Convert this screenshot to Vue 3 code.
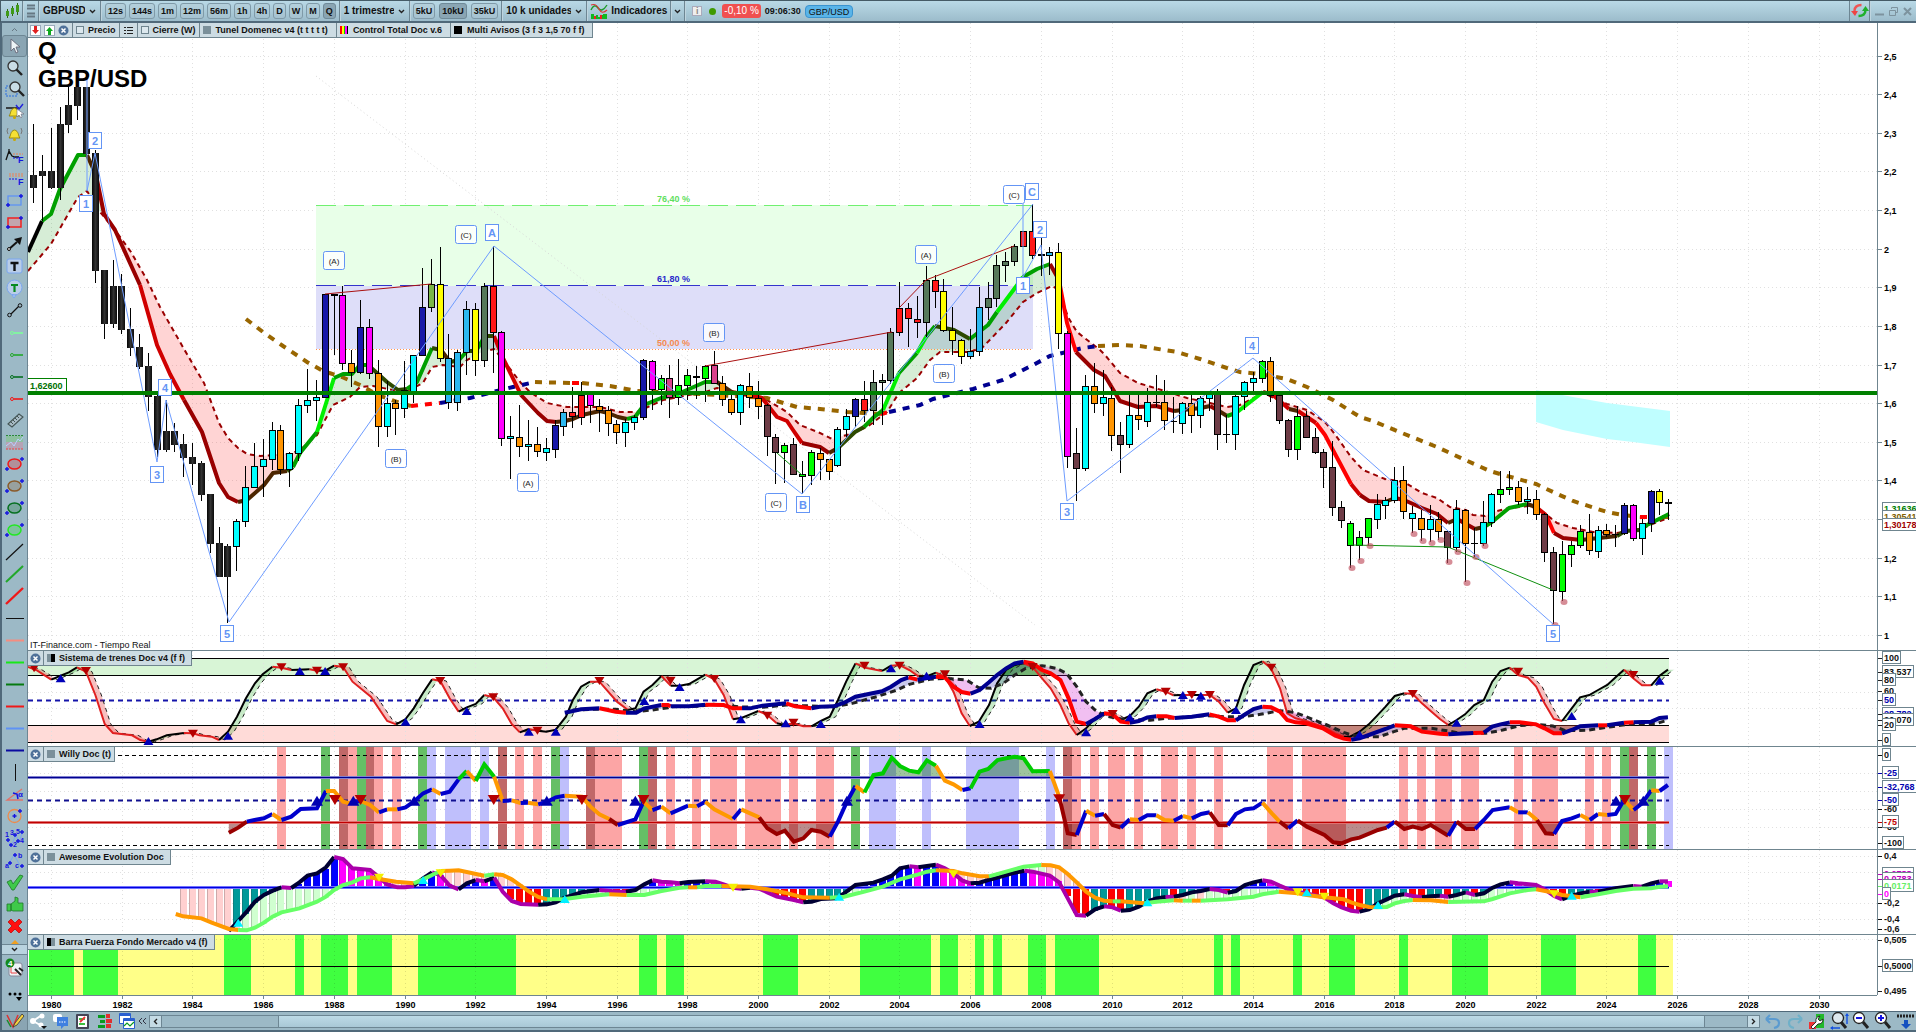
<script setup>
// ---------- shared geometry ----------
const X0 = 33.5
const STEP = 8.839
const years = Array.from({ length: 26 }, (_, i) => 1980 + i * 2)
const yearX = (y) => Math.round(51 + (y - 1980) * 35.35) + 0.5
const priceY = (v) => Math.round(635 - (v - 1) * 386.3) + 0.5
const prices = Array.from({ length: 16 }, (_, i) => 2.5 - i * 0.1)
const fmt = (v) => String(Math.round(v * 10) / 10).replace('.', ',')

const parse = (s, fx = (x) => x, fy = (y) => y, out = [], colour = 'k') => {
  for (const t of s.trim().split(/\s+/)) {
    if (!t.includes(',')) { colour = t; continue }
    const [x, y] = t.split(',').map(Number)
    const px = fx(x)
    if (out.length && px <= out[out.length - 1].x) continue
    out.push({ x: px, y: fy(y), c: colour })
  }
  out.last = colour
  return out
}
const fy = (y) => 645 + y / 3
const sheets = [[28, 2.45], [640, 2.45], [1260, 2.39]]
const track = (...parts) => {
  let out = []
  parts.forEach((p, i) => {
    const [o, k] = sheets[i]
    out = parse(p, (x) => o + x / k, fy, out, out.last)
  })
  return out
}
const spans = (...parts) => parts.flatMap((p, i) => p.trim().split(/\s+/).map((t) => {
  const [o, k] = sheets[i]
  const [, c, a, b] = t.match(/([a-z])(\d+)-(\d+)/)
  const x = Math.round(o + a / k)
  return { c, x, w: Math.round(o + b / k) - x }
}))
const marks = (...parts) => parts.flatMap((p, i) => p.trim() ? p.trim().split(/\s+/).map((t) => {
  const [o, k] = sheets[i]
  const [x, y] = t.split(',').map(Number)
  return [o + x / k, fy(y)]
}) : [])
const runs = (pts) => {
  const out = []
  for (let i = 1; i < pts.length; i++) {
    const p = pts[i]
    const last = out[out.length - 1]
    if (last && last.c === p.c) last.d += ` ${p.x},${p.y}`
    else out.push({ c: p.c, d: `${pts[i - 1].x},${pts[i - 1].y} ${p.x},${p.y}` })
  }
  return out
}
const line = (pts) => pts.map((p) => `${p.x},${p.y}`).join(' ')
const valueAt = (pts, x) => {
  for (let i = 1; i < pts.length; i++) {
    if (x >= pts[i - 1].x && x <= pts[i].x) {
      const a = pts[i - 1], b = pts[i]
      return { y: a.y + ((b.y - a.y) * (x - a.x)) / (b.x - a.x), c: b.c }
    }
  }
  return null
}
const between = (a, b) => {
  const out = []
  let cur = null
  const end = Math.min(a[a.length - 1].x, b[b.length - 1].x)
  for (let x = Math.max(a[0].x, b[0].x); x <= end; x += 2) {
    const p = valueAt(a, x).y, q = valueAt(b, x).y
    const above = p < q
    if (!cur || cur.above !== above) {
      if (cur) { cur.t.push([x, p]); cur.u.push([x, q]) }
      cur = { above, t: [], u: [] }
      out.push(cur)
    }
    cur.t.push([x, p]); cur.u.push([x, q])
  }
  return out.map((r) => ({ above: r.above, d: [...r.t, ...r.u.reverse()].map((v) => v.join(',')).join(' ') }))
}
const area = (pts, base) => `${pts[0].x},${base} ${line(pts)} ${pts[pts.length - 1].x},${base}`
const up = ([x, y], s) => `${x - s},${y + s - 1} ${x + s},${y + s - 1} ${x},${y - s + 1}`
const down = ([x, y], s) => `${x - s},${y - s + 1} ${x + s},${y - s + 1} ${x},${y + s - 1}`

// ---------- price pane ----------
const bodyColour = { k: 'url(#ink)', c: '#00ffff', o: '#ff9400', n: '#1818a8', m: '#ff00ff', y: '#ffff00', s: '#2cb8f0', r: '#ff1818', e: '#56785a', l: '#7ab648', g: '#00ff00', p: '#d9418c', b: '#6e3c46', d: '#000000' }
const candles = `k124,175,188,203 k155,171,176,221 k128,171,188,189 k107,124,188,200 k87,105,125,133 k87,87,106,120 k87,87,154,155 k150,153,271,283 k270,270,324,339 k260,286,324,328 k274,286,330,334 k308,329,348,356 k334,347,367,369 k353,366,397,411 k395,396,450,457 k400,431,450,452
k423,431,445,452 k434,444,458,477 k443,457,464,485 k461,463,495,501 k494,494,544,553 k527,543,577,577 k544,546,577,623 c519,521,547,571 c466,487,522,527 c443,466,488,488 c439,459,467,497 c422,430,460,470 o425,430,470,475 c452,453,470,487 c399,405,454,461 c369,400,406,413 c380,397,401,421
n294,294,398,398 d294,294,296,355 m286,295,364,370 o350,363,373,387 n300,327,373,374 m319,327,374,379 o360,373,427,447 c381,403,427,437 o400,403,409,435 c361,390,409,418 c355,355,393,403 n268,307,356,356 l259,284,308,312 y247,284,359,362 s334,358,403,409 s350,352,403,411 s301,309,353,375 y303,309,361,376
e283,286,361,367 r246,286,333,373 m331,332,439,446 c416,436,439,479 o405,437,447,457 c420,444,447,461 o427,444,452,457 c438,448,453,461 n420,425,450,458 s409,412,427,436 r387,412,417,428 r382,395,418,425 m392,392,406,423 o399,406,411,432 o406,410,424,436 o420,424,433,444 c419,422,433,447 c415,417,423,430
n359,360,418,420 m360,361,390,410 g375,378,390,405 p365,378,398,418 g359,385,398,405 g369,375,386,400 d366,376,378,399 g365,366,379,402 p351,365,384,384 o376,383,400,406 o393,399,413,415 c384,385,413,425 o373,386,398,408 o381,398,407,419 b404,405,437,456 b434,437,453,484 g443,445,453,483 b438,444,475,475
g461,474,477,494 g450,452,476,485 o448,453,460,480 o459,459,472,480 c427,429,466,467 c409,416,430,437 n398,399,417,427 r381,399,411,422 e370,382,411,425 e374,380,383,425 e328,332,381,384 r282,308,333,336 r303,308,319,347 r296,319,323,338 e266,280,323,337 r275,280,292,308 y279,291,331,332 y307,330,341,355
y339,340,357,364 s329,351,357,359 s287,307,352,356 e282,298,308,320 e255,265,299,307 e252,261,266,282 e244,246,262,266 r231,231,247,247 r204,231,256,259 d237,254,256,276 s247,252,256,275 y243,252,334,349 m331,333,457,468 b428,453,469,501 c375,386,469,471 o363,386,404,413 c370,397,404,416 o387,398,436,451
b422,435,445,473 c395,415,445,448 o395,415,420,430 c388,402,422,427 d375,402,403,407 o380,402,421,430 d397,421,422,433 c402,403,424,434 o395,403,416,433 c396,398,416,428 c392,393,399,411 b389,394,435,450 d415,434,435,443 c395,396,435,450 c381,382,397,410 c372,378,383,392 g360,361,379,383 o357,361,396,402
b395,395,421,424 b419,420,450,457 g406,416,450,460 b411,416,438,438 b428,437,453,454 b449,452,468,488 b441,467,508,516 b501,507,521,528 g521,523,546,568 g531,537,546,560 g518,518,538,546 c494,504,520,529 c497,500,506,519 c467,480,501,503 o466,480,512,519 c506,513,519,533 o510,518,530,541 c505,519,530,542
o512,519,532,540 b531,531,548,563 c500,509,548,552 o509,510,544,582 d528,543,544,557 c501,522,544,546 c493,494,523,527 g471,489,495,503 g471,487,490,495 o481,487,502,505 c487,499,502,514 o490,499,515,520 b513,514,553,562 b547,552,591,624 g541,554,592,601 g541,545,555,567 g525,531,546,548 o514,532,551,555
c526,530,552,558 o524,530,535,537 d525,534,535,547 n503,505,534,535 m504,505,539,541 c519,523,539,555 n490,491,524,532 y489,491,503,515 d499,502,504,520`.trim().split(/\s+/).map((t, i) => {
  const [h, a, b, l] = t.slice(1).split(',').map(Number)
  return { x: Math.floor(X0 + i * STEP), h, a, b, l, c: t[0] }
})

const trend = parse(`k 28,252 42,221 g 51,214 60,189 78,155 87,155 b 96,175 r 104,214 115,230 140,285 h 157,345 170,374 184,400 r 202,432 219,483 228,497 238,502 b 247,500 264,485 273,473 287,471 d 293,467 g 300,453 317,432 l 334,378 g 343,374 352,374 360,365 368,365 d 387,382 398,390 407,389 g 417,382 432,348 d 441,350 b 450,362 d 459,360 g 467,351 d 476,351 g 485,336 d 494,336 h 503,358 521,395 r 538,413 547,421 556,422 b 565,421 573,419 582,415 600,411 608,413 618,417 627,419 g 635,417
644,405 661,398 680,393 705,382 717,382 b 733,393 r 749,395 h 762,398 777,417 787,421 793,430 802,443 r 820,447 829,453 b 838,448 d 855,432 864,427 g 874,417 883,410 l 899,373 g 917,353 l 926,337 g 935,326 d 954,330 970,339 g 988,325 997,312 l 1006,300 1023,277 g 1037,269 1050,264 r 1059,280 f 1067,323 1076,352 r 1094,370 1105,376 1120,401 1138,407 1156,406 1174,411 b 1183,410 1201,408 1210,406 r 1219,411 b 1227,416 g 1236,413 l 1254,399 1263,392 r 1273,395 h 1289,409
b 1298,411 h 1316,423 f 1325,435 1334,452 1351,484 h 1360,495 r 1369,501 1385,502 b 1395,498 r 1404,500 1422,508 1437,514 1448,523 b 1457,519 r 1475,529 b 1484,527 g 1492,522 1509,508 1527,504 b 1536,507 h 1546,515 f 1554,533 r 1563,538 1581,540 b 1599,538 1617,536 d 1625,531 1640,530 g 1647,525 1669,514`)
const trendColour = { k: '#000', g: '#00a000', l: '#00f000', d: '#2d4a00', b: '#4d2600', r: '#990000', h: '#d00000', f: '#ff0000' }
const signal = parse(`28,271 51,244 78,197 87,191 100,212 115,230 131,252 147,280 160,307 184,349 204,383 219,423 228,438 238,448 247,454 260,456 290,454 300,450 317,435 333,405 350,397 360,387 373,386 393,390 407,391 423,383 432,367 443,365 460,367 467,360 482,352 494,349 507,365 521,383 530,392 547,403 567,407 600,407 620,412 637,412 663,400 705,392 717,388 762,397 787,412 800,425 820,433 832,439 847,435 867,427 887,412 899,393 917,378 930,360 940,352 970,352 983,347 1006,323 1023,302 1037,293 1052,286 1059,290 1068,317 1077,332 1100,350 1105,355 1120,373 1138,383 1165,391 1187,398 1210,403 1227,407 1240,405 1263,393 1287,404 1307,410 1325,422 1334,433 1351,457 1363,470 1385,479 1404,482 1422,493 1437,498 1450,507 1466,510 1473,515 1485,516 1490,513 1509,508 1530,506 1543,512 1557,523 1573,528 1593,532 1617,533 1640,529 1660,521 1669,518`)
const tunnel = between(trend, signal)
const longMa = parse(`b 246,319 263,332 283,346 307,362 323,371 342,377 360,385 378,395 400,403 411,406 r 440,403 n 470,398 493,392 513,387 535,382 b 572,383 r 582,383 b 610,386 637,391 700,394 767,398 780,402 797,407 820,409 847,412 880,414 r 889,412 n 920,405 933,399 973,389 1003,380 1033,365 1050,356 1083,348 1098,346 b 1120,345 1140,346 1177,352 1200,359 1227,368 1240,372 1260,374 1287,379 1307,387 1333,400 1360,417 1373,421 1397,431 1437,447 1463,459 1490,471 1500,474 1518,479 1536,484 1553,492 1573,501 1607,512 1623,515 1640,517 r 1648,517 b 1669,517`)
const longColour = { b: '#996600', r: '#ff0000', n: '#000090' }

const waves = [['2', 95, 141], ['1', 86, 204], ['4', 165, 388], ['3', 157, 475], ['5', 227, 634], ['A', 492, 233], ['B', 803, 505], ['C', 1032, 192], ['2', 1040, 230], ['1', 1023, 286], ['3', 1067, 512], ['4', 1252, 346], ['5', 1553, 634]]
const subWaves = [['(A)', 334, 261], ['(C)', 466, 235], ['(B)', 396, 459], ['(A)', 528, 483], ['(B)', 714, 333], ['(C)', 776, 503], ['(A)', 926, 255], ['(B)', 944, 374], ['(C)', 1014, 195]]
const dots = [[1352, 568], [1361, 561], [1370, 546], [1414, 534], [1423, 541], [1432, 543], [1441, 540], [1449, 562], [1458, 552], [1467, 583], [1476, 557], [1485, 546], [1564, 602], [1555, 625]]

// ---------- Sistema de trenes ----------
const fast = track(
  'r 0,66 20,75 57,104 k 80,92 100,82 120,67 r 142,80 165,150 188,237 208,264 255,271 275,285 295,290 k 315,283 340,271 382,264 r 404,265 420,271 450,275 468,285 k 490,260 512,215 534,160 556,115 575,88 599,65 r 621,68 645,75 k 690,73 r 708,77 k 728,77 750,62 r 772,66 795,110 840,155 880,228 902,238 k 925,222 945,190 968,143 990,103 r 1010,108 1033,160 1055,200 k 1075,187 1097,177 1118,150 r 1140,157 1163,190 1185,237 1205,262 k 1227,252 r 1248,257 k 1270,260 1293,254 1318,215 1335,165 1355,125 1377,110 r 1400,110 1443,170 1470,195 k 1488,190 1508,140 1530,120 1552,93',
  '52,95 r 75,122 k 97,122 120,117 140,103 160,89 r 182,103 205,150 228,223 k 250,218 270,208 290,198 r 312,210 335,235 k 355,240 r 376,235 400,244 420,244 k 443,228 465,215 485,165 505,110 528,55 r 550,68 593,78 k 615,62 r 636,60 660,75 683,95 k 700,95 725,83 r 747,95 768,140 788,205 808,243 k 830,230 855,180 875,115 897,75 918,60 940,55 r 962,66 985,100 1006,130 1030,180 1050,235 1070,270 k 1093,250 1115,220 1137,203 r 1158,208 1178,225 k 1200,213 1222,185 1243,145 1265,133 r 1288,140 1307,151 k 1330,150 r 1352,150 k 1374,150 r 1396,150 1418,170 1440,203 k 1460,190 1480,120 1503,60 1525,49 r 1546,70 1568,130',
  '27,75 45,130 65,205 85,220 110,228 150,245 180,265 200,275 k 215,275 238,260 260,238 280,212 300,185 322,153 345,145 r 365,147 387,175 410,200 430,222 450,240 k 470,225 490,208 512,180 535,165 555,110 575,78 597,68 r 617,90 640,98 660,125 680,175 702,222 722,228 k 745,190 765,157 787,150 808,135 830,120 850,97 870,74 r 892,100 913,121 935,121 k 955,92 975,74')
const ribbon = fast.slice(1).map((p, i) => {
  const q = fast[i]
  return { c: p.c, d: `${q.x},${q.y} ${p.x},${p.y} ${p.x + 6},${p.y} ${q.x + 6},${q.y}` }
})
const slow = track(
  'n 1315,203 1355,193 1400,190 r 1440,200 1465,203 n 1490,203 1510,190 1552,180 r 1568,180',
  '75,184 n 120,184 160,179 r 205,180 228,190 250,190 n 270,190 300,182 358,175 r 380,184 420,190 n 440,185 475,184 500,173 528,155 560,147 593,139 615,125 640,105 658,97 r 680,104 n 700,100 725,95 r 747,97 768,125 788,141 810,146 n 832,135 855,112 875,90 897,70 918,55 940,50 r 962,55 985,75 1006,85 1030,105 1050,160 1070,230 1093,237 n 1115,222 1137,205 r 1158,208 1178,230 1200,233 n 1222,228 1243,217 1265,214 r 1290,214 1310,219 n 1352,215 1395,208 r 1418,215 1440,226 1460,226 n 1480,210 1503,192 1525,185 r 1546,187 1568,200',
  '45,198 65,225 85,232 110,235 150,250 180,272 200,281 218,284 n 238,280 260,270 300,252 322,241 r 360,244 387,260 430,266 450,268 n 510,264 r 535,263 n 555,245 575,238 597,232 r 620,232 660,238 680,250 702,265 722,265 n 745,255 765,244 808,241 r 830,241 n 870,233 r 893,232 n 935,230 955,219 975,217')
const slowLag = track(
  '1335,195 1380,193 1440,193 1488,200 1530,195 1568,188',
  '75,185 140,184 180,178 250,186 300,187 358,180 420,183 470,186 520,175 580,155 630,135 660,118 710,103 747,100 800,105 830,128 860,130 890,115 918,90 945,70 985,62 1020,70 1045,85 1070,125 1093,170 1115,195 1140,213 1180,222 1250,226 1290,220 1350,215 1390,212 1430,215 1480,215 1520,208 1568,197',
  '45,200 85,203 120,220 160,240 200,262 218,270 250,275 285,275 320,260 345,250 410,250 450,258 480,265 540,265 580,255 620,242 660,238 700,243 730,257 780,256 840,245 880,238 950,235 975,225')
const slowFill = between(slow, slowLag)
const trainUp = marks('80,100 295,288 490,272 666,78 728,78 925,230 1075,198 1227,260 1293,260 1510,168', '97,126 247,223 357,235 443,237 615,70 702,92 832,237 1093,262 1200,217 1330,150 1374,152 1460,195', '238,268 470,233 745,213 955,107')
const trainDown = marks('15,70 142,78 404,266 621,67 708,77 772,67 1010,108 1140,157 1248,257 1400,108', '75,107 182,102 312,212 376,233 550,62 636,62 747,88 962,66 1158,207 1288,140 1352,150 1396,150', '27,68 365,147 617,80 892,90')

// ---------- Willy ----------
const willyColour = { r: '#fca5a5', g: '#66bf66', d: '#c06868', b: '#bfbffc' }
const stripes = spans(
  'r610-632 g718-740 d762-784 r784-806 g806-827 d827-848 r848-870 r892-914 g955-978 b978-1000 b1022-1085 b1107-1129 d1151-1174 r1194-1215 r1237-1259 g1281-1303 b1303-1325 d1367-1389 r1389-1455 g1497-1519 d1519-1541',
  'r64-86 r127-149 r171-238 r257-345 r365-387 r431-475 g517-539 b561-627 b691-713 b799-929 b995-1017 d1036-1058 r1058-1080 r1102-1125 r1147-1188 r1210-1232 r1276-1318 r1340-1362 r1406-1428',
  'r17-79 r100-206 r332-354 r375-397 r418-459 r480-523 r607-629 r650-712 r777-798 r817-839 g860-882 d882-904 g925-947 b966-987')
const willy = track(
  'r 492,563 515,548 536,530 n 555,525 578,520 599,507 o 621,525 n 645,515 668,492 708,490 730,438 o 750,438 772,470 790,475 n 800,470 815,468 o 838,480 860,502 n 880,493 o 905,493 n 925,487 945,470 968,445 990,433 o 1011,447 n 1033,440 1055,403 g 1075,378 o 1097,408 g 1118,358 1142,395 o 1163,468 n 1185,466 o 1207,474 n 1225,473 o 1250,478 n 1272,470 1293,457 1315,452 o 1357,455 1378,485 1400,508 1424,522 r 1445,540 n 1488,523 1508,470 o 1530,495 n 1552,485',
  'o 75,505 n 118,482 o 140,484 n 160,470 o 182,493 228,522 n 248,493 o 292,517 r 312,550 335,567 355,557 377,590 400,580 420,555 443,560 465,575 n 485,530 507,470 528,423 o 550,442 g 572,390 595,385 617,338 637,363 660,377 682,382 703,346 725,362 o 747,407 768,418 790,435 n 810,430 g 832,380 853,372 876,345 897,340 918,335 940,340 962,379 1004,378 o 1027,455 r 1048,565 1070,570 n 1093,497 o 1115,512 n 1137,507 r 1158,540 1178,548 n 1200,523 o 1222,525 n 1243,511 1265,511 o 1285,525 1308,527 n 1330,513 o 1352,520 n 1375,507 1396,502 r 1418,540 1440,541 n 1460,507 1482,493 1503,490 1525,473 o 1548,505',
  '47,530 r 68,550 n 90,526 r 112,545 154,570 175,592 195,595 218,583 238,578 282,555 303,548 n 322,530 r 345,552 365,545 387,552 408,540 450,572 n 470,530 r 492,552 514,552 n 535,525 556,495 597,487 o 617,502 n 640,502 o 662,525 r 683,565 703,567 n 722,528 745,520 766,510 o 788,525 n 808,507 o 830,510 n 850,507 870,465 o 893,495 n 913,475 935,436 o 955,438 n 975,420')
const willyLine = { n: '#0000cc', o: '#ff9900', r: '#990000', g: '#00cc00' }
const willyUp = marks('708,467 797,467 946,467 1271,467 1488,467', '507,467', '851,467 916,467')
const willyDown = marks('752,465 815,465 1141,465 1357,465 1508,465', '1027,463', '872,465')

// ---------- Awesome ----------
const aoFast = track(
  'k 492,858 515,828 536,800 556,770 578,750 600,737 621,727 p 645,729 k 665,712 685,692 708,685 730,667 750,636 p 772,642 795,670 838,675 860,697 880,718 905,727 925,727 945,722 k 968,700 990,682 p 1010,690 1033,722 1055,733 k 1075,715 1097,705 p 1118,709 k 1142,698 p 1163,740 1185,768 1207,777 1250,779 k 1272,778 1293,772 1315,758 1357,742 1400,735 p 1445,740 1465,740 k 1488,735 1510,718 1530,706 p 1552,710',
  '75,712 97,715 k 118,711 160,709 p 185,710 205,718 228,728 248,731 k 270,728 p 292,731 312,742 335,755 377,765 400,772 k 420,770 443,762 480,760 500,745 528,720 572,713 595,703 617,692 637,670 660,664 p 682,667 k 703,663 725,659 p 747,670 768,685 790,707 810,715 k 832,713 853,705 876,698 897,690 918,683 942,677 p 962,680 1004,692 1027,712 1048,760 1070,810 1093,812 k 1115,793 1137,784 p 1158,787 1178,797 k 1200,795 1222,785 1243,770 1265,760 1288,756 p 1308,755 k 1330,750 1352,742 1374,738 1396,732 p 1418,735 1440,743 k 1460,738 1482,720 1503,712 1525,706 p 1546,710',
  '47,722 68,733 90,740 112,745 154,758 175,775 195,787 218,797 238,800 k 260,793 282,775 303,763 322,752 345,748 p 365,753 387,757 k 408,754 430,752 p 450,755 k 470,750 492,742 p 514,750 k 535,745 556,728 575,718 597,712 p 617,715 660,720 683,735 703,753 722,763 k 745,752 766,745 788,740 p 808,740 k 850,730 892,723 p 913,725 k 935,715 955,709 p 975,709')
const aoSlow = track(
  'o 362,807 380,814 425,820 450,833 492,852 515,855 g 536,856 556,848 578,833 599,815 621,802 665,790 708,770 730,755 750,735 772,720 795,712 815,700 838,697 o 860,702 902,710 945,715 g 968,703 990,690 1011,678 o 1033,677 1055,676 1118,692 g 1142,688 o 1163,690 1185,703 1207,722 1228,740 1250,756 1272,763 g 1315,762 1357,755 1424,748 o 1467,750 g 1510,750 1552,738',
  '97,728 118,727 o 140,727 g 160,723 200,723 o 270,725 312,733 355,743 400,757 465,758 g 500,755 550,740 595,725 637,703 682,688 703,680 725,676 o 768,678 790,685 832,694 855,694 g 897,680 940,665 983,660 o 1006,661 1027,667 1048,687 1070,712 1093,740 1115,758 1137,767 1158,769 g 1178,769 o 1235,775 g 1265,770 1308,766 o 1330,767 g 1352,767 o 1374,767 g 1440,763 1503,755 1525,748',
  '45,740 o 90,745 112,750 154,757 200,763 218,772 238,780 260,786 282,787 g 303,786 322,775 345,768 365,765 o 408,766 450,771 g 535,769 556,762 597,745 640,735 660,733 o 703,743 722,750 766,757 g 808,748 850,738 892,731 935,730 955,725 975,724')
const ZERO = 887
const bars = []
for (let i = 17; i < 186; i++) {
  const x = X0 + i * STEP
  const s = valueAt(aoSlow, x - 1), f = valueAt(aoFast, x - 1)
  const box = (y, c) => bars.push({ x: Math.floor(x) - 3, y: Math.min(y, ZERO), h: Math.abs(y - ZERO), c })
  if (s) box(s.y, s.c === 'o' ? '#ffd0d0' : '#d0ffd0')
  if (f) box(f.y, f.y < ZERO ? (f.c === 'k' ? '#0000ff' : '#ff00ff') : (f.c === 'k' ? '#009999' : '#ff0000'))
}
const aoColour = { k: '#000033', p: '#aa00aa', o: '#ff9900', g: '#66ff66' }
const aoUp = marks('515,833 968,705 1315,762', '488,755 1243,772', '112,742 282,780 745,752')
const aoDown = marks('860,698 1011,685', '228,728 768,688', '90,742 154,755 703,748')

// ---------- Barra ----------
const force = spans(
  'g2-113 g135-220 g480-546 g654-676 g718-784 g806-892 g955-1196 g1497-1541',
  'g64-108 g301-387 g539-713 g735-779 g821-843 g865-887 g951-995 g1017-1125 g1406-1428 g1448-1470',
  'g79-100 g165-227 g332-354 g459-545 g672-755 g904-947')

// ---------- value axes: [text, y, colour, box width] ----------
const mainTags = [['1,31636', 509, '#008000', 38], ['1,30541', 517, '#806000', 38], ['1,30178', 525, '#a00000', 38]]
const trainTags = [['60', 691, '#111'], ['100', 658, '#111', 18], ['83,537', 672, '#111', 31], ['80', 680, '#111', 13], ['50', 700, '#0000b0', 13], ['28,782', 714, '#0000b0', 31], ['26,070', 720, '#111', 31], ['20', 725, '#111', 13], ['0', 740, '#111', 8]]
const willyTags = [['-60', 809, '#111'], ['-80', 827, '#111'], ['0', 755, '#111', 8], ['-25', 773, '#0000b0', 16], ['-32,768', 787, '#0000b0', 34], ['-50', 800, '#0000b0', 16], ['-75', 822, '#c00000', 16], ['-100', 843, '#111', 21]]
const aoTags = [['0,4', 856, '#111'], ['-0,2', 903, '#111'], ['-0,4', 919, '#111'], ['-0,6', 929, '#111'], ['0,0788', 874, '#c000c0', 31], ['0,0783', 879, '#c000c0', 31], ['0,0171', 886, '#66ee66', 31], ['0', 894, '#ff00ff', 8]]
const forceTags = [['0,505', 940, '#111'], ['0,5000', 966, '#111', 30], ['0,495', 991, '#111']]

// ---------- tool icons ----------
const lens = '<circle cx="8" cy="8" r="5" fill="#c9dde6" stroke="#333" stroke-width="1.3"/><path d="M11.500 11.500L17 17" stroke="#222" stroke-width="2.4"/>'
const plus = (x, y) => `<path d="M${x - 2} ${y}h4M${x} ${y - 2}v4" stroke="#1414e0" stroke-width="1.4"/>`
const ray = (c) => `<circle cx="7" cy="11" r="1.500" fill="none" stroke="${c}"/><path d="M9 11h9" stroke="${c}" stroke-width="1.6"/>`
const ell = (c) => `<ellipse cx="9.500" cy="10" rx="6.500" ry="5" fill="${c}" fill-opacity=".25" stroke="${c}" stroke-width="1.5"/>${plus(2, 15)}${plus(17, 5)}`
const diag = (c, w) => `<path d="M1 18L18 2" stroke="${c}" stroke-width="${w}"/>`
const hl = (c, w) => `<path d="M1 10.500H19" stroke="${c}" stroke-width="${w}"/>`
const bell = '<path d="M4 14c2-2 1-7 5.500-8 4.500 1 3.500 6 5.500 8z" fill="#f5e034" stroke="#8a7a00" stroke-width=".8"/><circle cx="9.500" cy="15.500" r="1.500" fill="#c9a800"/>'
const num = (t, x, y) => `<text x="${x}" y="${y}" font-size="7" font-weight="700" fill="#1414e0" font-family="Liberation Sans">${t}</text>`
const tools = [
  ['Cursor', '<path d="M6 3v12l3-3 2 5 2-1-2-5h4z" fill="#eef4f7" stroke="#667" stroke-width=".9"/>'],
  ['Zoom', lens],
  ['Zoom área', '<rect x="1" y="6" width="11" height="10" fill="none" stroke="#2a6fe0" stroke-dasharray="2 1"/><g transform="translate(2 -1)">' + lens + '</g>'],
  ['Alerta', '<path d="M1 6h13" stroke="#222" stroke-width="1.600"/>' + bell + '<path d="M11 3l3 4 4-5" fill="none" stroke="#22d" stroke-width="1.400"/><path d="M12 7v8l2-2 2 3 1-1-1-3h3z" fill="#fff" stroke="#667" stroke-width=".6"/>'],
  ['Campana', bell + '<path d="M3 4q-2 3 0 6M16 4q2 3 0 6" fill="none" stroke="#777"/>'],
  ['Ancla', '<path d="M1 14L4 5l3 5 3 1h4M4 8V3" fill="none" stroke="#111" stroke-width="1.300"/><path d="M8 8h10" stroke="#ee8050" stroke-dasharray="2 1"/><path d="M8 12h5" stroke="#1414e0" stroke-dasharray="2 1"/><text x="13" y="17" font-size="9" font-weight="700" fill="#1414e0" font-family="Liberation Sans">F</text>'],
  ['Fibonacci', '<path d="M4 6h14M4 8h14" stroke="#ee8050" stroke-dasharray="2 1"/><path d="M4 11h8" stroke="#1414e0" stroke-dasharray="2 1"/><text x="13" y="17" font-size="9" font-weight="700" fill="#1414e0" font-family="Liberation Sans">F</text>'],
  ['Rectángulo', '<rect x="3" y="6" width="13" height="9" fill="none" stroke="#5f92f5" stroke-width="1.300"/>' + plus(3, 15) + plus(16, 6)],
  ['Rectángulo rojo', '<rect x="3" y="6" width="13" height="9" fill="#f88" fill-opacity=".4" stroke="#f02020" stroke-width="1.500"/>' + plus(3, 15) + plus(16, 6)],
  ['Flecha', '<path d="M3 16l9-8" stroke="#111" stroke-width="2"/><path d="M17 3l-8 2 6 6z" fill="#111"/><circle cx="4" cy="15" r="1.500" fill="#ddd" stroke="#111"/>'],
  ['Texto', '<rect x="2" y="3" width="15" height="14" rx="2" fill="#b9cde8" stroke="#7aa6f0"/><path d="M5.500 7h8M9.500 7v8" stroke="#111" stroke-width="2.400"/>'],
  ['Globo', '<circle cx="9.500" cy="9.500" r="7.500" fill="#b9cde8" stroke="#7aa6f0"/><path d="M7 17l2 3 2-3z" fill="#b9cde8" stroke="#7aa6f0"/><path d="M6 7h7M9.500 7v7" stroke="#078a20" stroke-width="2.200"/>'],
  ['Segmento', '<path d="M5 15L14 6" stroke="#111" stroke-width="1.200"/><circle cx="4.500" cy="15" r="1.800" fill="#9cb8c6" stroke="#111"/><circle cx="15" cy="5.500" r="1.800" fill="#9cb8c6" stroke="#111"/>'],
  ['Semirrecta clara', ray('#7dff9a')], ['Semirrecta verde', ray('#22a82a')], ['Semirrecta oscura', ray('#067020')], ['Semirrecta roja', ray('#f01818')],
  ['Regla', '<path d="M3 14L14 4l4 3L7 17z" fill="#a9bcc6" stroke="#455" stroke-width="1.100"/><path d="M6 12l2 2M8 10l2 2M10 8l2 2M12 6l2 2" stroke="#455"/>'],
  ['Patrón', '<path d="M1 4h17v6H1z" fill="#8cc0a0"/><path d="M1 10h17v7H1z" fill="#b5a3b5"/><path d="M1 3.500h17" stroke="#2a8a3a" stroke-dasharray="2 1"/><path d="M1 17h17" stroke="#e44" stroke-dasharray="2 1"/><path d="M1 14l5-4 3 4 4-7 2 2 3-4" fill="none" stroke="#b8d0ff"/>'],
  ['Elipse roja', ell('#f01818')], ['Elipse marrón', ell('#8a5a2a')], ['Elipse verde', ell('#067020')], ['Elipse clara', ell('#22e822')],
  ['Línea', diag('#111', 1.2)], ['Línea verde', diag('#22a82a', 2)], ['Línea roja', diag('#f01818', 2.4)],
  ['Horizontal', hl('#111', 1)], ['Horizontal salmón', hl('#f58d80', 2)], ['Horizontal clara', hl('#18e818', 2)], ['Horizontal verde', hl('#067a10', 2)], ['Horizontal roja', hl('#f01818', 2)], ['Horizontal azul', hl('#5f92f5', 2)], ['Horizontal marino', hl('#0a0aa0', 2)],
  ['Vertical', '<path d="M10.500 2v17" stroke="#111"/>'],
  ['Ángulo', '<path d="M17 5L2 16h16" fill="none" stroke="#e0736a" stroke-width="1.300"/><path d="M8 9l4 1 1 5" fill="none" stroke="#1414e0" stroke-width="1.500"/><text x="13" y="13" font-size="8" font-weight="700" fill="#1414e0" font-family="Liberation Sans">α</text>'],
  ['Ciclo', '<circle cx="9.500" cy="10" r="6.500" fill="none" stroke="#ef8a4a" stroke-width="1.300"/>' + plus(9.5, 10) + plus(15, 5)],
  ['Ondas 12345', '<path d="M3 13L6 18 11 7l3 8 3-10" fill="none" stroke="#7aa6f0"/>' + plus(3, 12) + plus(6, 17) + plus(10, 7) + plus(13, 13) + plus(17, 4) + num('1', 0, 9) + num('2', 8, 19) + num('3', 5, 7) + num('4', 15, 15) + num('5', 11, 6)],
  ['Ondas abc', '<path d="M3 15L9 5l7 12" fill="none" stroke="#7aa6f0"/>' + plus(5, 13) + plus(10, 5) + plus(17, 16) + num('a', 0, 18) + num('b', 13, 8) + num('c', 10, 18)],
  ['Aceptar', '<path d="M2 10l4-2 2 4 7-9 3 1-9 14H7z" fill="#3fc94a" stroke="#1e7a28" stroke-width=".8"/>'],
  ['Me gusta', '<path d="M2 10h4v7H2zM6 10l4-3V3l3 1v5h5v8H8l-2-1z" fill="#3fc94a" stroke="#1e7a28" stroke-width=".8"/>'],
  ['Eliminar', '<path d="M3 6l3-3 4 4 4-4 3 3-4 4 4 4-3 3-4-4-4 4-3-3 4-4z" fill="#ff1010" stroke="#b00" stroke-width=".7"/>'],
]
const periods = ['12s', '144s', '1m', '12m', '56m', '1h', '4h', 'D', 'W', 'M', 'Q']
const units = ['5kU', '10kU', '35kU']
const leftActions = [
  ['Compartir', '<path d="M4 10L13 4M4 10l9 5" stroke="#fff" stroke-width="2"/><circle cx="4" cy="10" r="3" fill="#fff"/><circle cx="13" cy="5" r="2.500" fill="#fff"/><circle cx="12" cy="14" r="2.500" fill="#fff"/><path d="M12 15h6l-3 3z" fill="#111"/>'],
  ['Chat', '<rect x="2" y="3" width="9" height="8" rx="2" fill="#fff"/><path d="M6 6h11v9h-4l-3 3v-3H6z" fill="#3f7fe0"/><path d="M8 11h7" stroke="#fff" stroke-dasharray="1.500 1"/>'],
  ['Lista', '<rect x="3" y="3" width="13" height="15" rx="1" fill="#445"/><rect x="5" y="5" width="9" height="11" fill="#fff"/><path d="M6 8h6M6 13h6" stroke="#0a0" stroke-width="1.500"/><path d="M7 11l5-5" stroke="#e33" stroke-width="1.800"/>'],
  ['Libro de órdenes', '<path d="M3 4h7v3H3zM3 14h7v3H3zM5 9h5v3H5z" fill="#0a9a20"/><path d="M11 3h4v4h-4zM11 8h6v4h-6zM11 13h5v4h-5z" fill="#e03030"/>'],
  ['Ventanas', '<rect x="2" y="2" width="12" height="11" rx="1" fill="#2a5fd0"/><rect x="3" y="5" width="10" height="7" fill="#fff"/><rect x="6" y="7" width="12" height="11" rx="1" fill="#2a5fd0"/><rect x="7" y="10" width="10" height="7" fill="#fff"/><path d="M7 15l3-3 3 3 4-4" fill="none" stroke="#0a9a20" stroke-width="1.200"/>'],
]
const rightActions = [
  ['Deshacer', '<path d="M3 8h8q5 0 5 4t-5 5M3 8l4-4M3 8l4 4" fill="none" stroke="#5b9bd0" stroke-width="2.200"/>'],
  ['Rehacer', '<path d="M17 8H9q-5 0-5 4t5 5M17 8l-4-4M17 8l-4 4" fill="none" stroke="#6fb0c8" stroke-width="2.200"/>'],
  ['Configurar', '<path d="M9 3h8v14H9z" fill="#22b82a"/><path d="M2 11h7v7H2z" fill="#e33"/><path d="M4 16l5-5q-1-5 4-6l-2 3 2 2 3-2q0 5-5 5l-5 5z" fill="#fff" stroke="#222" stroke-width=".9"/>'],
  ['Ajustar', '<circle cx="9" cy="7" r="5.500" fill="#dde8ee" stroke="#222" stroke-width="1.300"/><path d="M12 11l5 6" stroke="#222" stroke-width="3"/><path d="M18 3v10M2 17h9" stroke="#1450e0" stroke-width="1.400"/><path d="M16 5l2-3 2 3zM4 15l-3 2 3 2z" fill="#1450e0"/>'],
  ['Alejar', '<circle cx="8" cy="7" r="5.500" fill="#fff" stroke="#222" stroke-width="1.300"/><path d="M12 11l5 6" stroke="#222" stroke-width="3"/><path d="M5 7h6" stroke="#1414e0" stroke-width="2"/>'],
  ['Acercar', '<circle cx="8" cy="7" r="5.500" fill="#fff" stroke="#222" stroke-width="1.300"/><path d="M12 11l5 6" stroke="#222" stroke-width="3"/><path d="M5 7h6M8 4v6" stroke="#1414e0" stroke-width="2"/>'],
  ['Más', '<path d="M2 5h18" stroke="#222" stroke-width="3" stroke-dasharray="2 1"/><path d="M9 9h4v4h3l-5 5-5-5h3z" fill="#1450c0"/>'],
]
</script>

<template>
  <div class="app">
    <header class="topbar">
      <div class="cell logo">
        <svg width="16" height="18"><path d="M3.500 7v9M8.500 4v10M13.500 1v12" stroke="#2b6a10" /><path d="M2 9h3v5H2zM7 6h3v6H7zM12 3h3v7h-3z" fill="#3f9a18" /></svg>
      </div>
      <div class="cell grip">
        <svg width="10" height="16"><path d="M1 2.500h8M1 5.500h8M1 10.500h8M1 13.500h8" stroke="#667883" stroke-width="2" /></svg>
      </div>
      <label class="cell pick symbol"><select aria-label="Instrumento"><option>GBPUSD</option></select><svg class="chev" width="7" height="5"><path d="M1 1l2.500 2.500L6 1" /></svg></label>
      <div class="cell group">
        <button v-for="p in periods" :key="p" :class="{ on: p === 'Q' }">{{ p }}</button>
      </div>
      <label class="cell pick span"><select aria-label="Periodo"><option>1 trimestre</option></select><svg class="chev" width="7" height="5"><path d="M1 1l2.500 2.500L6 1" /></svg></label>
      <div class="cell group units">
        <button v-for="u in units" :key="u" :class="{ on: u === '10kU' }">{{ u }}</button>
      </div>
      <label class="cell pick amount"><select aria-label="Unidades"><option>10 k unidades</option></select><svg class="chev" width="7" height="5"><path d="M1 1l2.500 2.500L6 1" /></svg></label>
      <button class="cell plain indicators">
        <svg width="18" height="18"><path d="M1 8Q4 1 8 6t9-3" fill="none" stroke="#1c9a28" stroke-width="1.400" /><path d="M1 3q5-2 8 4t8 1" fill="none" stroke="#d33" stroke-width="1.200" /><path d="M1 17v-5h3v2h2v-1h2v2h2v-2h3v-1h4v5z" fill="#10b820" /><path d="M4 17v-3h2v3zM10 17v-4h2v4z" fill="#e22" /></svg>
        Indicadores
      </button>
      <button class="cell plain drop" aria-label="Más indicadores"><svg class="chev" width="7" height="5"><path d="M1 1l2.500 2.500L6 1" /></svg></button>
      <div class="status">
        <span class="info">i</span><span class="live"></span><span class="change">-0,10 %</span><time>09:06:30</time><span class="ticker">GBP/USD</span>
      </div>
      <button class="cell plain sync" aria-label="Sincronizar">
        <svg width="18" height="18"><path d="M0 9l4 5 3-5z" fill="#e44" /><path d="M3.500 9q0-6 7-6" fill="none" stroke="#e55" stroke-width="2.400" /><path d="M14.500 8q0 6-7 6" fill="none" stroke="#1fb02c" stroke-width="2.400" /><path d="M11 9l3.500-5L18 9z" fill="#1fb02c" /></svg>
      </button>
      <div class="window">
        <button aria-label="Minimizar"><svg width="9" height="9"><path d="M0 7.500h9" stroke="#7d939e" stroke-width="2" /></svg></button>
        <button aria-label="Restaurar"><svg width="9" height="9"><path d="M2.500 2V.5h6v5H7M.5 3.500h6v5h-6z" fill="none" stroke="#7d939e" /></svg></button>
        <button aria-label="Cerrar"><svg width="9" height="9"><path d="M1 1l7 7M8 1L1 8" stroke="#7d939e" stroke-width="2" /></svg></button>
      </div>
    </header>

    <div class="middle">
      <nav class="tools">
        <button class="scroll" aria-label="Subir"><svg width="7" height="5"><path d="M1 4l2.500-2.500L6 4" fill="none" stroke="#667883" /></svg></button>
        <button v-for="(t, i) in tools" :key="t[0]" class="tool" :class="{ on: i === 0 }" :aria-label="t[0]"><svg width="20" height="20" v-html="t[1]"></svg></button>
        <div class="peek"><svg width="8" height="6"><path d="M0 6l4-4 4 4z" fill="#f0a020" /></svg></div>
        <button class="scroll lower" aria-label="Bajar"><svg width="7" height="5"><path d="M1 1l2.500 2.500L6 1" fill="none" stroke="#222" stroke-width="1.400" /></svg></button>
        <button class="foot" aria-label="Ajustes"><svg width="20" height="22"><rect x="4" y="5" width="13" height="13" rx="2" fill="#eef3f6" stroke="#889" /><path d="M6 8v7h6" stroke="#e44" fill="none" /><path d="M10 11l6 6M14 10l4 3" stroke="#222" stroke-width="2" /><circle cx="5" cy="5" r="4.500" fill="#148a1c" /><text x="3" y="8" font-size="8" fill="#fff" font-family="Liberation Sans" font-weight="700">4</text></svg></button>
        <button class="foot" aria-label="Más"><svg width="18" height="12"><circle cx="4" cy="3" r="1.500" /><circle cx="9" cy="3" r="1.500" /><circle cx="14" cy="3" r="1.500" /><path d="M10 6h6l-3 4z" /></svg></button>
      </nav>

      <main class="charts">
        <section class="pane price">
          <svg class="plot">
            <defs>
              <linearGradient id="ink"><stop offset="0" stop-color="#050505" /><stop offset=".5" stop-color="#333" /><stop offset="1" stop-color="#0a0a0a" /></linearGradient>
            </defs>
            <g transform="translate(-28 -23)">
              <g class="grid">
                <line v-for="y in years" :key="y" :x1="yearX(y)" :x2="yearX(y)" y1="23" y2="650" />
                <line v-for="p in prices" :key="p" x1="28" x2="1877" :y1="priceY(p)" :y2="priceY(p)" />
              </g>
              <rect x="316" y="205" width="717" height="81" fill="#e8ffe8" />
              <rect x="316" y="286" width="717" height="63" fill="#dedef9" />
              <polygon points="1536,390 1573,397 1607,403 1670,411 1670,447 1633,442 1607,439 1563,430 1536,422" fill="#bffeff" />
              <line x1="316" y1="76" x2="1035" y2="625" stroke="#d6d6d6" stroke-dasharray="1 3" />
              <polygon v-for="(t, i) in tunnel" :key="i" :points="t.d" :fill="t.above ? 'rgba(0,140,0,.16)' : 'rgba(255,40,40,.2)'" />
              <line x1="316" x2="1033" y1="205.500" y2="205.500" stroke="#70f070" stroke-dasharray="20 8" />
              <line x1="316" x2="1033" y1="285.500" y2="285.500" stroke="#3434cc" stroke-dasharray="20 8" />
              <line x1="316" x2="1033" y1="349.500" y2="349.500" stroke="#ff9050" stroke-dasharray="1 2" />
              <polyline :points="line(signal)" fill="none" stroke="#990000" stroke-width="2" stroke-dasharray="5 4" />
              <polyline v-for="(r, i) in runs(longMa)" :key="'m' + i" :points="r.d" fill="none" :stroke="longColour[r.c]" stroke-width="4" stroke-dasharray="7 7" />
              <polyline v-for="(r, i) in runs(trend)" :key="'t' + i" :points="r.d" fill="none" :stroke="trendColour[r.c]" stroke-width="4" stroke-linejoin="round" />
              <g shape-rendering="crispEdges">
                <g v-for="(c, i) in candles" :key="i">
                  <rect :x="c.x" :y="c.h" width="1" :height="c.l - c.h" fill="#000" />
                  <rect :x="c.x - 3" :y="c.a" width="7" :height="c.b - c.a" fill="#000" />
                  <rect v-if="c.c !== 'd' && c.c !== 'k'" :x="c.x - 2" :y="c.a + 1" width="5" :height="c.b - c.a - 2" :fill="bodyColour[c.c]" />
                  <rect v-if="c.c === 'k'" :x="c.x - 3" :y="c.a" width="7" :height="c.b - c.a" fill="url(#ink)" />
                </g>
              </g>
              <g fill="none" stroke="#aa1010"><path d="M325 294L431 284M705 366L892 332M899 308L926 280L1014 246" /><path d="M777 453L802 475M1351 545L1448 547L1553 590" stroke="#109010" /></g>
              <ellipse v-for="(d, i) in dots" :key="'d' + i" :cx="d[0]" :cy="d[1]" rx="3.500" ry="3" fill="#c05060" fill-opacity=".65" />
              <path d="M87 76V191L95 153L157 462L166 400L229 622L494 246L802 494L1033 204M1023 204V277L1041 245L1067 501L1253 358L1553 624" fill="none" stroke="#6e9cff" />
              <line x1="28" x2="1877" y1="393" y2="393" stroke="#008000" stroke-width="4" />
              <g v-for="(w, i) in waves" :key="'w' + i">
                <rect :x="w[1] - 6.500" :y="w[2] - 8.500" width="13" height="16" fill="#fff" stroke="#6495f5" />
                <text class="wave" :x="w[1]" :y="w[2] + 4">{{ w[0] }}</text>
              </g>
              <g v-for="(w, i) in subWaves" :key="'s' + i">
                <rect :x="w[1] - 10.500" :y="w[2] - 9.500" width="21" height="18" rx="2" fill="#fff" fill-opacity=".8" stroke="#6495f5" />
                <text class="subwave" :x="w[1]" :y="w[2] + 3">{{ w[0] }}</text>
              </g>
              <text class="level" x="657" y="202" fill="#5fe05f">76,40 %</text>
              <text class="level" x="657" y="282" fill="#2828cc">61,80 %</text>
              <text class="level" x="657" y="346" fill="#f58a50">50,00 %</text>
              <rect x="27.500" y="378.500" width="39" height="13" fill="#fff" stroke="#008000" />
              <text class="level" x="30" y="389" fill="#007000">1,62600</text>
              <text class="source" x="30" y="648">IT-Finance.com - Tiempo Real</text>
            </g>
          </svg>
          <div class="legend">
            <span class="cell tabicons">
              <svg width="11" height="11"><rect x=".5" y=".5" width="10" height="10" fill="#fff" stroke="#9ab" /><path d="M4 1h3v4h2L5.500 9 2 5h2z" fill="#e02020" /></svg>
              <svg width="11" height="11"><rect x=".5" y=".5" width="10" height="10" fill="#fff" stroke="#9ab" /><path d="M4 10h3V6h2L5.500 2 2 6h2z" fill="#10a820" /></svg>
              <svg width="11" height="11"><circle cx="5.500" cy="5.500" r="5" fill="#4f7199" /><path d="M3.500 3.500l4 4M7.500 3.500l-4 4" stroke="#fff" stroke-width="1.500" /></svg>
            </span>
            <label class="cell tab"><input type="checkbox">Precio</label>
            <span class="cell list"><svg width="9" height="9"><path d="M0 1.500h2M0 4.500h2M0 7.500h2M3 1.500h6M3 4.500h6M3 7.500h6" stroke="#222" /></svg></span>
            <label class="cell tab"><input type="checkbox">Cierre (W)</label>
            <span class="cell tab long"><i class="sw grey"></i>Tunel Domenec v4 (t t t t t)</span>
            <span class="cell tab long"><i class="sw multi"></i>Control Total Doc v.6</span>
            <span class="cell tab long"><i class="sw black"></i>Multi Avisos (3 f 3 1,5 70 f f)</span>
          </div>
          <h1 class="title">Q<br>GBP/USD</h1>
          <svg class="axis"><g transform="translate(-1878 -23)">
            <g v-for="p in prices" :key="p"><line x1="1878" x2="1882" :y1="priceY(p)" :y2="priceY(p)" stroke="#6f858f" /><text v-if="fmt(p) !== '1,3'" x="1884" :y="priceY(p) + 3">{{ fmt(p) }}</text></g>
            <g v-for="t in mainTags" :key="t[0]"><rect x="1882.500" :y="t[1] - 6.500" :width="t[3]" height="12" class="tag" /><text x="1884" :y="t[1] + 3" :fill="t[2]">{{ t[0] }}</text></g>
          </g></svg>
        </section>

        <section class="pane trains">
          <svg class="plot"><g transform="translate(-28 -651)">
            <rect x="28" y="658" width="1641" height="17" fill="#d8f5d6" />
            <rect x="28" y="725" width="1641" height="18" fill="#ffdbd8" />
            <g class="grid"><line v-for="y in years" :key="y" :x1="yearX(y)" :x2="yearX(y)" y1="651" y2="746" /><line x1="28" x2="1877" y1="692.500" y2="692.500" /><line x1="28" x2="1877" y1="708.500" y2="708.500" /></g>
            <path d="M28 658.500H1669M28 675.500H1669M28 725.500H1669M28 742.500H1669" stroke="#000" />
            <path d="M28 700.500H1669" stroke="#1414aa" stroke-width="2" stroke-dasharray="5 4" />
            <polygon v-for="(t, i) in slowFill" :key="i" :points="t.d" :fill="t.above ? 'rgba(40,40,180,.25)' : 'rgba(200,0,200,.25)'" />
            <clipPath id="low"><rect x="28" y="725" width="1641" height="20" /></clipPath>
            <clipPath id="high"><rect x="28" y="655" width="1641" height="20" /></clipPath>
            <polygon :points="area(slow, 725)" fill="#8a3020" fill-opacity=".5" clip-path="url(#low)" />
            <polygon :points="area(slow, 675)" fill="#107010" fill-opacity=".5" clip-path="url(#high)" />
            <polygon v-for="(r, i) in ribbon" :key="'r' + i" :points="r.d" :fill="r.c === 'k' ? 'rgba(0,160,0,.22)' : 'rgba(220,0,0,.25)'" />
            <polyline :points="line(fast)" transform="translate(6 0)" fill="none" stroke="#222" stroke-dasharray="4 4" />
            <polyline v-for="(r, i) in runs(fast)" :key="'f' + i" :points="r.d" fill="none" :stroke="r.c === 'k' ? '#000' : '#e02020'" stroke-width="2" />
            <polyline :points="line(slowLag)" fill="none" stroke="#222" stroke-width="3" stroke-dasharray="6 4" />
            <polyline v-for="(r, i) in runs(slow)" :key="'l' + i" :points="r.d" fill="none" :stroke="r.c === 'n' ? '#000090' : '#ff0000'" stroke-width="4" />
            <polygon v-for="(m, i) in trainUp" :key="'u' + i" :points="up(m, 5)" fill="#0000b8" />
            <polygon v-for="(m, i) in trainDown" :key="'v' + i" :points="down(m, 5)" fill="#b40000" />
          </g></svg>
          <div class="legend"><button class="cell close" aria-label="Cerrar Sistema de trenes"><svg width="11" height="11"><circle cx="5.500" cy="5.500" r="5" fill="#4f7199" /><path d="M3.500 3.500l4 4M7.500 3.500l-4 4" stroke="#fff" stroke-width="1.500" /></svg></button><span class="cell tab pad"><i class="sw half"></i>Sistema de trenes Doc v4 (f f)</span></div>
          <svg class="axis"><g transform="translate(-1878 -651)"><g v-for="t in trainTags" :key="t[0]"><line x1="1878" x2="1882" :y1="t[1] + 0.5" :y2="t[1] + 0.5" stroke="#222" /><rect v-if="t[3]" x="1882.500" :y="t[1] - 6.500" :width="t[3]" height="12" class="tag" /><text x="1884" :y="t[1] + 3" :fill="t[2]">{{ t[0] }}</text></g></g></svg>
        </section>

        <section class="pane willy">
          <svg class="plot"><g transform="translate(-28 -747)">
            <g class="grid"><line v-for="y in years" :key="y" :x1="yearX(y)" :x2="yearX(y)" y1="747" y2="849" /><line v-for="y in [773, 791, 809, 827]" :key="'h' + y" x1="28" x2="1877" :y1="y + 0.5" :y2="y + 0.5" /></g>
            <rect v-for="(s, i) in stripes" :key="i" :x="s.x" y="747" :width="s.w" height="102" :fill="willyColour[s.c]" />
            <path d="M118 755.500H1669M28 845.500H1669" stroke="#000" stroke-dasharray="4 3" />
            <clipPath id="over"><rect x="28" y="747" width="1641" height="30" /></clipPath>
            <clipPath id="under"><rect x="28" y="823" width="1641" height="30" /></clipPath>
            <polygon :points="area(willy, 777)" fill="#006400" fill-opacity=".38" clip-path="url(#over)" />
            <polygon :points="area(willy, 823)" fill="#600" fill-opacity=".45" clip-path="url(#under)" />
            <path d="M28 777.500H1669" stroke="#8080d0" stroke-width="3" /><path d="M28 777.500H1669" stroke="#000090" />
            <path d="M28 822.500H1669" stroke="#e07070" stroke-width="3" /><path d="M28 822.500H1669" stroke="#c00000" />
            <path d="M28 800.500H1669" stroke="#101090" stroke-width="2" stroke-dasharray="5 4" />
            <polyline v-for="(r, i) in runs(willy)" :key="'l' + i" :points="r.d" fill="none" :stroke="willyLine[r.c]" stroke-width="4" />
            <polygon v-for="(m, i) in willyUp" :key="'u' + i" :points="up(m, 6)" fill="#0000b0" />
            <polygon v-for="(m, i) in willyDown" :key="'v' + i" :points="down(m, 6)" fill="#b40000" />
          </g></svg>
          <div class="legend"><button class="cell close" aria-label="Cerrar Willy"><svg width="11" height="11"><circle cx="5.500" cy="5.500" r="5" fill="#4f7199" /><path d="M3.500 3.500l4 4M7.500 3.500l-4 4" stroke="#fff" stroke-width="1.500" /></svg></button><span class="cell tab"><i class="sw grey"></i>Willy Doc (t)</span></div>
          <svg class="axis"><g transform="translate(-1878 -747)"><g v-for="t in willyTags" :key="t[0]"><line x1="1878" x2="1882" :y1="t[1] + 0.5" :y2="t[1] + 0.5" :stroke="t[2]" /><rect v-if="t[3]" x="1882.500" :y="t[1] - 6.500" :width="t[3]" height="12" class="tag" /><text x="1884" :y="t[1] + 3" :fill="t[2]">{{ t[0] }}</text></g></g></svg>
        </section>

        <section class="pane awesome">
          <svg class="plot"><g transform="translate(-28 -850)">
            <g class="grid"><line v-for="y in years" :key="y" :x1="yearX(y)" :x2="yearX(y)" y1="850" y2="934" /><line v-for="y in [856, 872, 903, 919]" :key="'h' + y" x1="28" x2="1877" :y1="y + 0.5" :y2="y + 0.5" /></g>
            <g v-for="(b, i) in bars" :key="i" shape-rendering="crispEdges"><rect :x="b.x" :y="b.y" width="7" :height="b.h" :fill="b.c" /><rect :x="b.x" :y="b.y" width="1" :height="b.h" fill="#333" fill-opacity=".25" /></g>
            <rect x="1667" y="881" width="5" height="6" fill="#ff00ff" />
            <path d="M28 887.500H1669" stroke="#7070ff" stroke-width="3" /><path d="M28 887.500H1669" stroke="#0000e0" />
            <polyline v-for="(r, i) in runs(aoFast)" :key="'f' + i" :points="r.d" fill="none" :stroke="aoColour[r.c]" stroke-width="4" />
            <polyline v-for="(r, i) in runs(aoSlow)" :key="'s' + i" :points="r.d" fill="none" :stroke="aoColour[r.c]" stroke-width="4" />
            <polygon v-for="(m, i) in aoUp" :key="'u' + i" :points="up(m, 5)" fill="#00f0ff" />
            <polygon v-for="(m, i) in aoDown" :key="'v' + i" :points="down(m, 5)" fill="#f4f000" />
          </g></svg>
          <div class="legend"><button class="cell close" aria-label="Cerrar Awesome"><svg width="11" height="11"><circle cx="5.500" cy="5.500" r="5" fill="#4f7199" /><path d="M3.500 3.500l4 4M7.500 3.500l-4 4" stroke="#fff" stroke-width="1.500" /></svg></button><span class="cell tab pad"><i class="sw grey"></i>Awesome Evolution Doc</span></div>
          <svg class="axis"><g transform="translate(-1878 -850)"><g v-for="t in aoTags" :key="t[0] + t[1]"><line x1="1878" x2="1882" :y1="t[1] + 0.5" :y2="t[1] + 0.5" :stroke="t[2]" /><rect v-if="t[3]" x="1882.500" :y="t[1] - 6.500" :width="t[3]" height="12" class="tag" /><text x="1884" :y="t[1] + 3" :fill="t[2]">{{ t[0] }}</text></g></g></svg>
        </section>

        <section class="pane force">
          <svg class="plot"><g transform="translate(-28 -935)">
            <rect x="29" y="935" width="1644" height="60" fill="#ffff88" />
            <rect v-for="(s, i) in force" :key="i" :x="s.x" y="935" :width="s.w" height="60" fill="#40ff40" />
            <g class="grid"><line v-for="y in years" :key="y" :x1="yearX(y)" :x2="yearX(y)" y1="935" y2="995" /><line x1="28" x2="1877" y1="939.500" y2="939.500" /></g>
            <path d="M28 966.500H1669" stroke="#000" />
          </g></svg>
          <div class="legend"><button class="cell close" aria-label="Cerrar Barra Fuerza"><svg width="11" height="11"><circle cx="5.500" cy="5.500" r="5" fill="#4f7199" /><path d="M3.500 3.500l4 4M7.500 3.500l-4 4" stroke="#fff" stroke-width="1.500" /></svg></button><span class="cell tab pad"><i class="sw flip"></i>Barra Fuerza Fondo Mercado v4 (f)</span></div>
          <svg class="axis"><g transform="translate(-1878 -935)"><g v-for="t in forceTags" :key="t[0]"><line x1="1878" x2="1882" :y1="t[1] + 0.5" :y2="t[1] + 0.5" stroke="#222" /><rect v-if="t[3]" x="1882.500" :y="t[1] - 6.500" :width="t[3]" height="12" class="tag" /><text x="1884" :y="t[1] + 3" :fill="t[2]">{{ t[0] }}</text></g></g></svg>
        </section>

        <section class="timeline">
          <svg class="plot"><g transform="translate(-28 -995)">
            <path d="M28 995.500H1877" stroke="#6f858f" />
            <g v-for="y in years" :key="y"><line :x1="yearX(y)" :x2="yearX(y)" y1="996" y2="999" stroke="#6f858f" /><text class="year" :x="yearX(y)" y="1008">{{ y }}</text></g>
          </g></svg>
        </section>
      </main>
    </div>

    <footer class="bottombar">
      <button class="pencil" aria-label="Dibujar"><svg width="20" height="18"><path d="M2 3l6 12 5-12" fill="none" stroke="#d33" stroke-width="1.500" /><path d="M8 15l2-4 7-9 2 2-7 9z" fill="#f5d040" stroke="#333" stroke-width=".8" /><path d="M2 8l4 7" stroke="#1a8a28" stroke-width="1.500" /></svg></button>
      <button v-for="a in leftActions" :key="a[0]" class="act" :aria-label="a[0]"><svg width="20" height="20" v-html="a[1]"></svg></button>
      <button class="fold" aria-label="Plegar"><svg width="9" height="8"><path d="M4 1L1 4l3 3M8 1L5 4l3 3" fill="none" stroke="#334" /></svg></button>
      <div class="scrollbar">
        <button aria-label="Izquierda"><svg width="5" height="7"><path d="M4 1L1.500 3.500 4 6" fill="none" stroke="#222" stroke-width="1.400" /></svg></button>
        <div class="lead"></div>
        <div class="thumb"></div>
        <div class="tail"></div>
        <button aria-label="Derecha"><svg width="5" height="7"><path d="M1 1l2.500 2.500L1 6" fill="none" stroke="#222" stroke-width="1.400" /></svg></button>
      </div>
      <button v-for="a in rightActions" :key="a[0]" class="act" :aria-label="a[0]"><svg width="20" height="20" v-html="a[1]"></svg></button>
    </footer>
  </div>
</template>

<style>
body { background: #9cb9c6; }
</style>

<style scoped>
.app { min-height: 100vh; display: flex; flex-direction: column; font: bold 9px/12px "Liberation Sans", Arial, sans-serif; color: #111; overflow: hidden; }
.app * { box-sizing: border-box; }
button { font: inherit; color: inherit; padding: 0; margin: 0; border: 0; background: none; display: flex; align-items: center; justify-content: center; }
svg { display: block; flex: none; }
.topbar { height: 23px; display: flex; align-items: stretch; background: linear-gradient(#b9d9e6, #9cbccb); border-top: 1px solid #455b66; border-bottom: 2px solid #50697a; border-left: 1px solid #455b66; }
.topbar > .cell { display: flex; align-items: center; border-right: 1px solid #6d8693; box-shadow: 1px 0 #bfd5df; }
.logo { width: 22px; justify-content: center; }
.grip { width: 16px; justify-content: center; }
.pick { gap: 4px; padding: 0 4px; }
.pick select { appearance: none; border: 0; background: none; font: inherit; font-size: 10px; color: inherit; padding: 0; flex: 1; min-width: 0; }
.symbol { width: 62px; }
.span { width: 70px; }
.amount { width: 85px; }
.chev path { fill: none; stroke: #222; stroke-width: 1.4; }
.group { gap: 3px; padding: 0 3px 0 4px; }
.group button { height: 16px; padding: 0 2px; border: 1px solid #7f9aa8; border-radius: 3px; background: linear-gradient(#b4d0dc, #a5c2d0); }
.group button.on { background: #8aa5b3; border-color: #6f8a98; }
.units { gap: 4px; padding: 0 3px; }
.indicators { gap: 3px; padding: 0 3px; font-size: 10px; }
.drop { width: 14px; justify-content: center; }
.status { flex: 1; display: flex; align-items: center; padding-left: 7px; }
.info { width: 10px; height: 10px; background: #eee; border: 1px solid #aab; color: #888; text-align: center; line-height: 8px; margin-right: 7px; }
.live { width: 7px; height: 7px; border-radius: 50%; background: #3f9a00; margin-right: 6px; }
.change { background: #f05050; color: #fff; border-radius: 3px; height: 14px; line-height: 14px; padding: 0 2px; font-weight: 400; font-size: 10px; margin-right: 4px; }
.status time { margin-right: 4px; }
.ticker { background: #5ab4e8; border: 1px solid #3a94d0; border-radius: 4px; height: 13px; line-height: 12px; padding: 0 3px; font-weight: 400; }
.topbar > .sync { width: 21px; justify-content: center; border-left: 1px solid #6d8693; }
.window { display: flex; align-items: center; gap: 5px; padding: 0 4px 0 5px; }
.middle { flex: 1; display: flex; }
.tools { width: 28px; flex: none; background: #9cb9c6; border-left: 2px solid #50697a; border-right: 1px solid #6d8693; display: flex; flex-direction: column; }
.scroll { height: 12px; }
.scroll.lower { height: 11px; background: #b9d3df; border-top: 1px solid #6d8693; border-bottom: 1px solid #6d8693; }
.tool { height: 22px; }
.tool.on { background: #8aa5b3; border: 1px solid #6d8693; border-radius: 3px; }
.peek { height: 7px; display: flex; justify-content: center; align-items: flex-end; }
.foot { height: 28px; }
.charts { flex: 1; min-width: 0; background: #fff; display: flex; flex-direction: column; }
.pane { position: relative; display: flex; border-top: 1px solid #6f858f; }
.pane.price { flex: 1 0 627px; border-top: 0; }
.trains { height: 96px; }
.willy { height: 103px; }
.awesome { height: 85px; }
.force { height: 61px; }
.timeline { height: 16px; display: flex; }
.plot { flex: 1; min-width: 0; width: 0; height: auto; align-self: stretch; }
.axis { width: 39px; height: auto; align-self: stretch; border-left: 1px solid #6f858f; }
.grid line { stroke: #e0e0e0; stroke-dasharray: 1 3; }
.force .grid line { stroke: #000; stroke-opacity: .12; }
.tag { fill: #fff; stroke: #6f858f; }
.wave { text-anchor: middle; font-size: 11px; fill: #6495f5; }
.subwave { text-anchor: middle; font-size: 8px; font-weight: 400; fill: #222; }
.source { font-size: 9px; font-weight: 400; fill: #111; }
.year { text-anchor: middle; }
.legend { position: absolute; left: 0; top: 0; height: 15px; display: flex; background: #cddce3; border-bottom: 1px solid #6f858f; }
.legend > .cell { border-right: 1px solid #6f858f; display: flex; align-items: center; }
.tabicons { width: 45px; gap: 3px; padding: 0 2px; }
.tab { gap: 4px; padding: 0 3px; white-space: nowrap; }
.tab.long { padding: 0 8px 0 3px; gap: 5px; }
.tab.pad { padding-right: 6px; }
.list { width: 18px; justify-content: center; }
.close { width: 16px; }
.tab input { appearance: none; width: 8px; height: 8px; margin: 0; border: 1px solid #6f858f; background: #dce8ee; }
.sw { width: 8px; height: 8px; }
.grey { background: #7b909a; }
.black { background: #000; }
.half { background: linear-gradient(90deg, #7b909a 50%, #000 50%); }
.flip { background: linear-gradient(90deg, #000 50%, #7b909a 50%); }
.multi { background: linear-gradient(90deg, #f00 25%, #ff0 25% 50%, #0c0 50% 65%, #f0f 65% 85%, #000 85%); }
.title { position: absolute; left: 10px; top: 14px; margin: 0; font-size: 24px; line-height: 28px; color: #000; }
.bottombar { height: 21px; display: flex; align-items: center; background: #9cb9c6; border-top: 1px solid #50697a; border-bottom: 2px solid #50697a; border-left: 2px solid #50697a; overflow: hidden; }
.pencil { width: 26px; height: 18px; background: #8aa5b3; border-right: 1px solid #6d8693; }
.act { width: 22px; height: 18px; flex: none; }
.fold { width: 9px; }
.scrollbar { flex: 1; display: flex; height: 13px; margin: 0 2px; border: 1px solid #6d8693; background: #9cb9c6; }
.scrollbar button { width: 12px; background: #c4dbe5; border-right: 1px solid #6d8693; }
.scrollbar button:last-child { border-left: 1px solid #6d8693; border-right: 0; }
.lead { flex: 117; }
.thumb { flex: 1433; background: linear-gradient(#bddae6, #a9c8d6); border-left: 1px solid #6d8693; border-right: 1px solid #6d8693; }
.tail { flex: 42; }
</style>
